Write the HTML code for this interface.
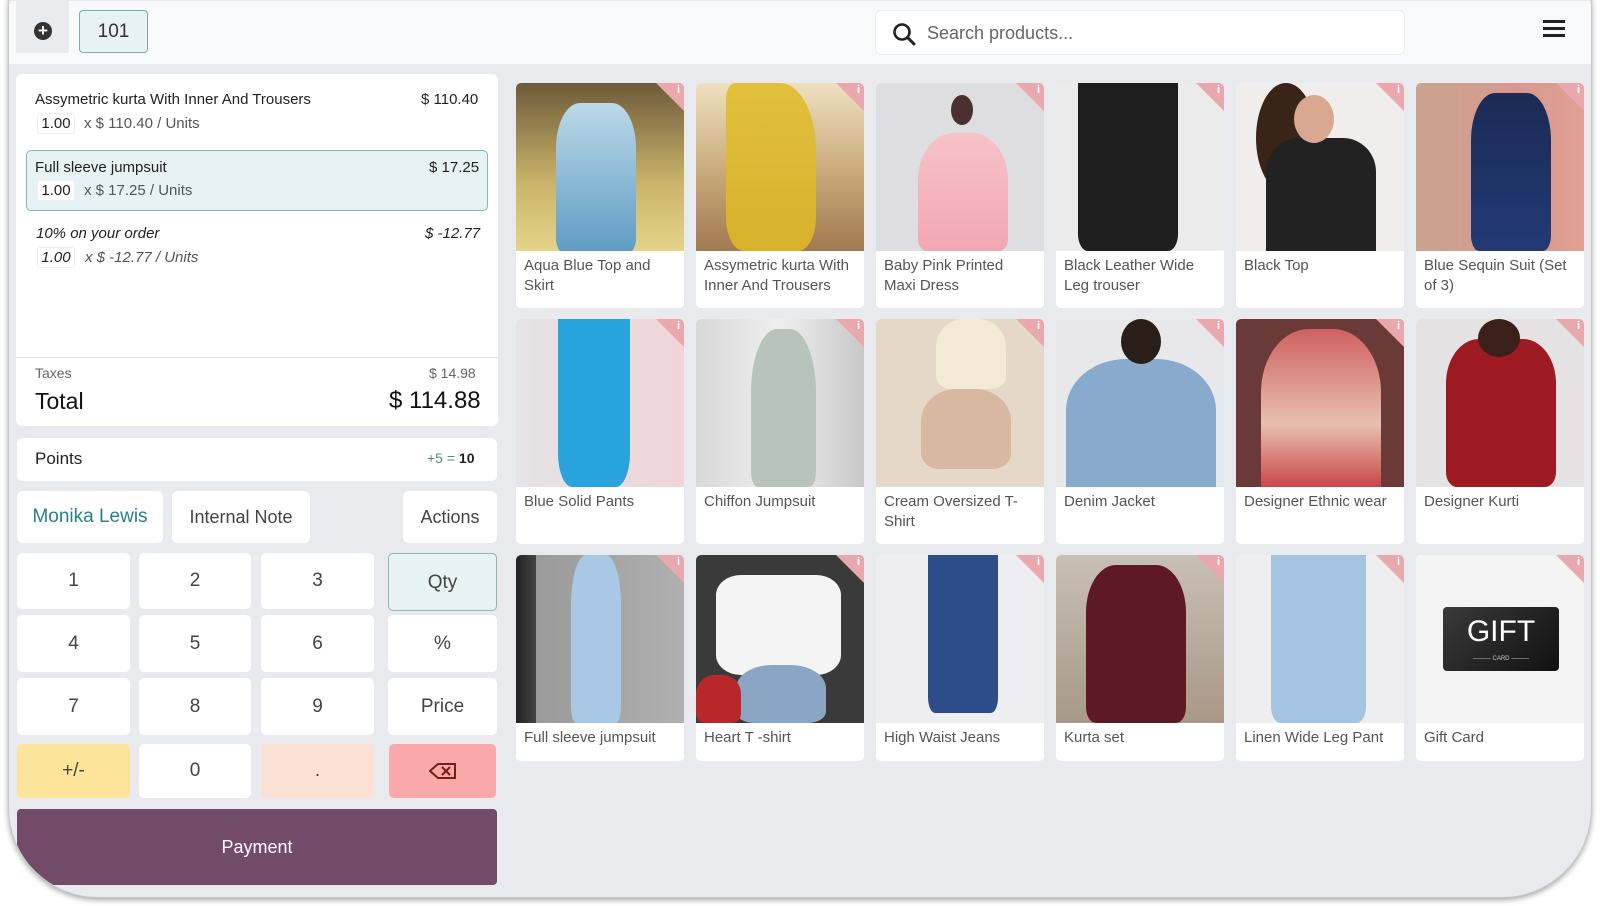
<!DOCTYPE html>
<html><head><meta charset="utf-8"><style>
*{box-sizing:border-box;margin:0;padding:0}
body{width:1600px;height:906px;background:#fff;position:relative;overflow:hidden;font-family:"Liberation Sans",sans-serif;color:#333}
.dev{position:absolute;left:8px;top:-80px;width:1584px;height:978px;border-radius:90px;background:#e9eaed;overflow:hidden;box-shadow:0 2px 6px rgba(0,0,0,.35);border:1px solid #c8c8c8}
.abs{position:absolute;white-space:nowrap}
.top{position:absolute;left:0;top:80px;width:1584px;height:63px;background:#f8f9fa}
.w{background:#fff;border-radius:6px}
.t15{font-size:15px}
.qb{position:absolute;left:36px;width:38px;height:21px;background:#fff;border:1px solid #eee;border-radius:3px;font-size:15px;text-align:center;line-height:20px;color:#222}
.key{position:absolute;background:#fff;border-radius:5px;font-size:19px;text-align:center;color:#444}
.card{position:absolute;width:168px;background:#fff;border-radius:5px;overflow:hidden}
.img{position:relative;width:168px;height:168px;overflow:hidden}
.lbl{padding:5px 8px 0 8px;font-size:15px;line-height:20px;color:#555}
.corner{position:absolute;right:0;top:0;width:0;height:0;border-left:28px solid transparent;border-top:28px solid #e9a7ae}
.ci{position:absolute;right:4px;top:1px;color:#fff;font-size:11px;font-weight:bold}
.fig{position:absolute;border-radius:40% 40% 20% 20%}
</style></head><body>
<div class="dev">
 <div class="top">
  <div class="abs" style="left:7px;top:0;width:53px;height:52px;background:#e9ecef"></div>
  <div class="abs" style="left:25px;top:21px;width:18px;height:18px;border-radius:50%;background:#333;color:#fff;font-size:17px;line-height:18px;text-align:center;font-weight:bold">+</div>
  <div class="abs" style="left:70px;top:9px;width:69px;height:43px;border:1px solid #7fa9ad;background:#e6f2f3;border-radius:4px;text-align:center;line-height:41px;font-size:19px;color:#333">101</div>
  <div class="abs" style="left:866px;top:9px;width:530px;height:45px;background:#fff;border:1px solid #eee;border-radius:6px">
   <svg class="abs" style="left:16px;top:11px" width="24" height="24" viewBox="0 0 24 24"><circle cx="10" cy="10" r="7.5" fill="none" stroke="#222" stroke-width="2.6"/><path d="M15.5 15.5L22 22" stroke="#222" stroke-width="3" stroke-linecap="round"/></svg>
   <div class="abs" style="left:51px;top:12px;font-size:18px;color:#666">Search products...</div>
  </div>
  <div class="abs" style="left:1534px;top:19px;width:22px;height:3px;background:#222;box-shadow:0 7px 0 #222,0 14px 0 #222"></div>
 </div>
 <!-- left panel -->
 <div style="position:absolute;left:-8px;top:80px">
  <div class="abs w" style="left:15px;top:73px;width:482px;height:352px"></div>
  <div class="abs t15" style="left:34px;top:90px;color:#222">Assymetric kurta With Inner And Trousers</div>
  <div class="abs t15" style="left:420px;top:90px;color:#222">$ 110.40</div>
  <div class="qb" style="top:112px">1.00</div>
  <div class="abs t15" style="left:83px;top:114px;color:#555">x $ 110.40 / Units</div>
  <div class="abs" style="left:25px;top:149px;width:462px;height:61px;background:#e6f2f3;border:1px solid #8ab5b9;border-radius:5px"></div>
  <div class="abs t15" style="left:34px;top:158px;color:#222">Full sleeve jumpsuit</div>
  <div class="abs t15" style="left:428px;top:158px;color:#222">$ 17.25</div>
  <div class="qb" style="top:179px">1.00</div>
  <div class="abs t15" style="left:83px;top:181px;color:#555">x $ 17.25 / Units</div>
  <div class="abs t15" style="left:35px;top:224px;color:#222;font-style:italic">10% on your order</div>
  <div class="abs t15" style="left:424px;top:224px;color:#222;font-style:italic">$ -12.77</div>
  <div class="qb" style="top:246px;font-style:italic">1.00</div>
  <div class="abs t15" style="left:84px;top:248px;color:#555;font-style:italic">x $ -12.77 / Units</div>
  <div class="abs" style="left:15px;top:356px;width:482px;height:1px;background:#e6e6e6"></div>
  <div class="abs" style="left:34px;top:364px;font-size:14px;color:#666">Taxes</div>
  <div class="abs" style="left:428px;top:364px;font-size:14px;color:#666">$ 14.98</div>
  <div class="abs" style="left:34px;top:387px;font-size:23px;color:#111">Total</div>
  <div class="abs" style="left:388px;top:386px;font-size:24px;color:#111">$ 114.88</div>
  <div class="abs w" style="left:16px;top:437px;width:480px;height:43px"></div>
  <div class="abs" style="left:34px;top:448px;font-size:17px;color:#222">Points</div>
  <div class="abs" style="left:426px;top:449px;font-size:14px;color:#222"><span style="color:#5a8a7a">+5 =</span> <b>10</b></div>
  <div class="abs w" style="left:16px;top:490px;width:146px;height:52px;text-align:center;line-height:52px;font-size:19px;color:#2a7f8a">Monika Lewis</div>
  <div class="abs w" style="left:171px;top:490px;width:138px;height:52px;text-align:center;line-height:52px;font-size:18px;color:#444">Internal Note</div>
  <div class="abs w" style="left:402px;top:490px;width:94px;height:52px;text-align:center;line-height:52px;font-size:18px;color:#444">Actions</div>
  <div class="key" style="left:16px;top:552px;width:113px;height:56px;line-height:56px">1</div>
  <div class="key" style="left:138px;top:552px;width:112px;height:56px;line-height:56px">2</div>
  <div class="key" style="left:260px;top:552px;width:113px;height:56px;line-height:56px">3</div>
  <div class="key" style="left:387px;top:552px;width:109px;height:58px;line-height:58px;background:#e6f2f3;border:1px solid #8ab5b9">Qty</div>
  <div class="key" style="left:16px;top:614px;width:113px;height:57px;line-height:57px">4</div>
  <div class="key" style="left:138px;top:614px;width:112px;height:57px;line-height:57px">5</div>
  <div class="key" style="left:260px;top:614px;width:113px;height:57px;line-height:57px">6</div>
  <div class="key" style="left:387px;top:614px;width:109px;height:57px;line-height:57px">%</div>
  <div class="key" style="left:16px;top:677px;width:113px;height:57px;line-height:57px">7</div>
  <div class="key" style="left:138px;top:677px;width:112px;height:57px;line-height:57px">8</div>
  <div class="key" style="left:260px;top:677px;width:113px;height:57px;line-height:57px">9</div>
  <div class="key" style="left:387px;top:677px;width:109px;height:57px;line-height:57px">Price</div>
  <div class="key" style="left:16px;top:743px;width:113px;height:54px;line-height:54px;background:#fce59a">+/-</div>
  <div class="key" style="left:138px;top:743px;width:112px;height:54px;line-height:54px">0</div>
  <div class="key" style="left:260px;top:743px;width:113px;height:54px;line-height:54px;background:#fbe0d6">.</div>
  <div class="key" style="left:388px;top:743px;width:107px;height:54px;line-height:54px;background:#f9a9a9"><svg width="28" height="16" viewBox="0 0 28 16" style="vertical-align:middle"><path d="M9 1H26V15H9L1 8Z" fill="none" stroke="#7a1a1a" stroke-width="2"/><path d="M13 4L21 12M21 4L13 12" stroke="#7a1a1a" stroke-width="2"/></svg></div>
  <div class="abs" style="left:16px;top:808px;width:480px;height:76px;background:#714b67;border-radius:4px;color:#fff;text-align:center;line-height:76px;font-size:18px">Payment</div>
 </div>
 <!-- grid -->
 <div style="position:absolute;left:-8px;top:80px">
 <div class="card" style="left:515px;top:82px;height:225px"><div class="img" style="background:linear-gradient(#6e5a3a,#c9b56a 60%,#e4d48a)"><div class="fig" style="left:40px;top:20px;width:80px;height:150px;background:linear-gradient(#bcd9e8,#5f9cc4);border-radius:30% 30% 10% 10%"></div><div class="corner"></div><div class="ci">i</div></div><div class="lbl">Aqua Blue Top and Skirt</div></div>
 <div class="card" style="left:695px;top:82px;height:225px"><div class="img" style="background:linear-gradient(#efe0c0,#c8a878 55%,#a07a50)"><div class="fig" style="left:30px;top:0;width:90px;height:168px;background:linear-gradient(#e2c03c,#d7b12c);border-radius:10% 40% 20% 20%"></div><div class="corner"></div><div class="ci">i</div></div><div class="lbl">Assymetric kurta With Inner And Trousers</div></div>
 <div class="card" style="left:875px;top:82px;height:225px"><div class="img" style="background:#dedddf"><div class="fig" style="left:42px;top:50px;width:90px;height:118px;background:linear-gradient(#f6c2c8,#f2a8b4);border-radius:40% 40% 10% 10%"></div><div class="fig" style="left:75px;top:12px;width:22px;height:30px;background:#4a3030;border-radius:50%"></div><div class="corner"></div><div class="ci">i</div></div><div class="lbl">Baby Pink Printed Maxi Dress</div></div>
 <div class="card" style="left:1055px;top:82px;height:225px"><div class="img" style="background:#ebebeb"><div class="fig" style="left:22px;top:0;width:100px;height:168px;background:#1e1e1e;border-radius:0 0 10% 10%"></div><div class="corner"></div><div class="ci">i</div></div><div class="lbl">Black Leather Wide Leg trouser</div></div>
 <div class="card" style="left:1235px;top:82px;height:225px"><div class="img" style="background:#efeeec"><div class="fig" style="left:20px;top:0;width:60px;height:110px;background:#3a2418;border-radius:50%"></div><div class="fig" style="left:30px;top:55px;width:110px;height:113px;background:#222;border-radius:30% 30% 0 0"></div><div class="fig" style="left:58px;top:12px;width:40px;height:48px;background:#d8a890;border-radius:50%"></div><div class="corner"></div><div class="ci">i</div></div><div class="lbl">Black Top</div></div>
 <div class="card" style="left:1415px;top:82px;height:225px"><div class="img" style="background:linear-gradient(90deg,#c8a48e,#d89890 60%,#e0a092)"><div class="fig" style="left:55px;top:10px;width:80px;height:158px;background:linear-gradient(#1c2a55,#223a75);border-radius:30% 30% 10% 10%"></div><div class="corner"></div><div class="ci">i</div></div><div class="lbl">Blue Sequin Suit (Set of 3)</div></div>
 <div class="card" style="left:515px;top:318px;height:225px"><div class="img" style="background:linear-gradient(90deg,#e4e4e6,#f0d4d8)"><div class="fig" style="left:42px;top:0;width:72px;height:168px;background:#29a3dc;border-radius:0 0 20% 20%"></div><div class="corner"></div><div class="ci">i</div></div><div class="lbl">Blue Solid Pants</div></div>
 <div class="card" style="left:695px;top:318px;height:225px"><div class="img" style="background:linear-gradient(90deg,#d8d8d8,#efefef 50%,#c8c8c8)"><div class="fig" style="left:55px;top:10px;width:65px;height:158px;background:#b6c4bc;border-radius:40% 40% 10% 10%"></div><div class="corner"></div><div class="ci">i</div></div><div class="lbl">Chiffon Jumpsuit</div></div>
 <div class="card" style="left:875px;top:318px;height:225px"><div class="img" style="background:#e6d8c8"><div class="fig" style="left:60px;top:0;width:70px;height:70px;background:#f2ead4"></div><div class="fig" style="left:45px;top:70px;width:90px;height:80px;background:#d8b8a0"></div><div class="corner"></div><div class="ci">i</div></div><div class="lbl">Cream Oversized T-Shirt</div></div>
 <div class="card" style="left:1055px;top:318px;height:225px"><div class="img" style="background:#e8e8ea"><div class="fig" style="left:10px;top:40px;width:150px;height:128px;background:#88aacc;border-radius:40% 40% 0 0"></div><div class="fig" style="left:65px;top:0;width:40px;height:45px;background:#2a1e18;border-radius:50%"></div><div class="corner"></div><div class="ci">i</div></div><div class="lbl">Denim Jacket</div></div>
 <div class="card" style="left:1235px;top:318px;height:225px"><div class="img" style="background:#6a3a38"><div class="fig" style="left:25px;top:10px;width:120px;height:158px;background:linear-gradient(#d06060,#e8c0b0 60%,#c84848);border-radius:40% 40% 0 0"></div><div class="corner"></div><div class="ci">i</div></div><div class="lbl">Designer Ethnic wear</div></div>
 <div class="card" style="left:1415px;top:318px;height:225px"><div class="img" style="background:#e4e2e2"><div class="fig" style="left:30px;top:20px;width:110px;height:148px;background:#9e1a22;border-radius:30% 30% 10% 10%"></div><div class="fig" style="left:62px;top:0;width:42px;height:38px;background:#3a2018;border-radius:50%"></div><div class="corner"></div><div class="ci">i</div></div><div class="lbl">Designer Kurti</div></div>
 <div class="card" style="left:515px;top:554px;height:206px"><div class="img" style="background:linear-gradient(90deg,#222 0,#444 20px,#9a9a9a 20px,#b0b0b0)"><div class="fig" style="left:55px;top:0;width:50px;height:168px;background:#a8c8e4;border-radius:30% 30% 10% 10%"></div><div class="corner"></div><div class="ci">i</div></div><div class="lbl">Full sleeve jumpsuit</div></div>
 <div class="card" style="left:695px;top:554px;height:206px"><div class="img" style="background:#3a3a3a"><div class="fig" style="left:20px;top:20px;width:125px;height:100px;background:#f4f4f4;border-radius:20%"></div><div class="fig" style="left:40px;top:110px;width:90px;height:58px;background:#8aa6c4"></div><div class="fig" style="left:0;top:120px;width:45px;height:48px;background:#b82828"></div><div class="corner"></div><div class="ci">i</div></div><div class="lbl">Heart T -shirt</div></div>
 <div class="card" style="left:875px;top:554px;height:206px"><div class="img" style="background:#eeeef0"><div class="fig" style="left:52px;top:0;width:70px;height:158px;background:#2c4c8a;border-radius:0 0 10% 10%"></div><div class="corner"></div><div class="ci">i</div></div><div class="lbl">High Waist Jeans</div></div>
 <div class="card" style="left:1055px;top:554px;height:206px"><div class="img" style="background:linear-gradient(#c8c0b4,#a89888)"><div class="fig" style="left:30px;top:10px;width:100px;height:158px;background:#5e1a22;border-radius:30% 30% 10% 10%"></div><div class="corner"></div><div class="ci">i</div></div><div class="lbl">Kurta set</div></div>
 <div class="card" style="left:1235px;top:554px;height:206px"><div class="img" style="background:#eeeef0"><div class="fig" style="left:35px;top:0;width:95px;height:168px;background:#a4c4e2;border-radius:0 0 10% 10%"></div><div class="corner"></div><div class="ci">i</div></div><div class="lbl">Linen Wide Leg Pant</div></div>
 <div class="card" style="left:1415px;top:554px;height:206px"><div class="img" style="background:#f4f4f5"><div class="abs" style="left:27px;top:52px;width:116px;height:64px;background:linear-gradient(135deg,#3a3a3a,#111);border-radius:4px;color:#fff;text-align:center;font-size:30px;line-height:50px">GIFT<div style="font-size:6px;line-height:4px;color:#ccc">——— CARD ———</div></div><div class="corner"></div><div class="ci">i</div></div><div class="lbl">Gift Card</div></div>
 </div>
</div>
</body></html>
